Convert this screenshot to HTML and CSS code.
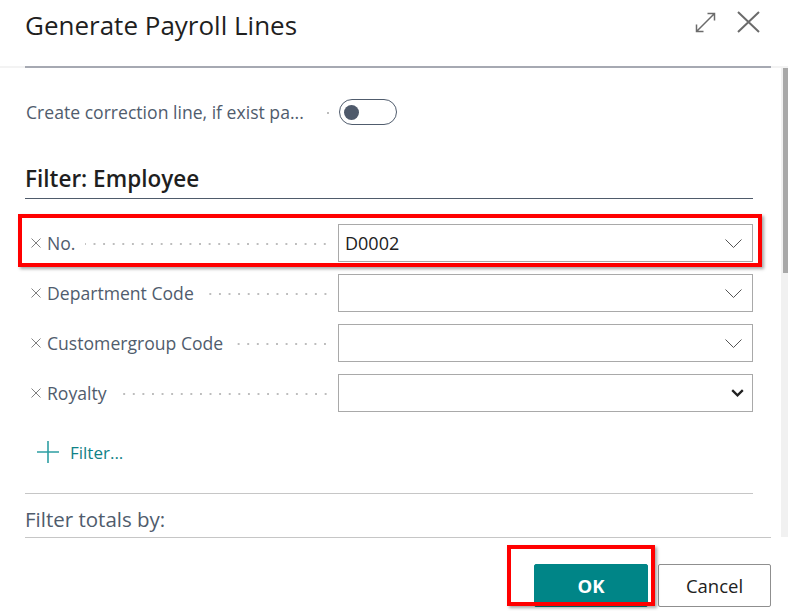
FILE: index.html
```html
<!DOCTYPE html>
<html lang="en">
<head>
<meta charset="utf-8">
<title>Generate Payroll Lines</title>
<link rel="stylesheet" href="styles.css">
</head>
<body>
<div class="dialog">
  <header class="dlg-head">
    <h1 class="dlg-title">Generate Payroll Lines</h1>
    <div class="dlg-actions">
      <svg class="ico-expand" width="21" height="21" viewBox="0 0 21 21" aria-hidden="true">
        <path d="M1.5 19.5 L19.5 1.5 M12.5 1.5 H19.5 V8.5 M1.5 12.5 V19.5 H8.5" fill="none" stroke="#6b6b6b" stroke-width="1.5"/>
      </svg>
      <svg class="ico-close" width="23" height="22" viewBox="0 0 23 22" aria-hidden="true">
        <path d="M1 1 L22 21 M22 1 L1 21" fill="none" stroke="#6b6b6b" stroke-width="2"/>
      </svg>
    </div>
  </header>
  <div class="head-sep"><div class="head-sep-line"></div></div>

  <div class="body-wrap">
    <div class="content">
      <div class="field-row toggle-row">
        <div class="field-label">
          <span class="label-text">Create correction line, if exist pa...</span>
          <span class="leader single"></span>
        </div>
        <div class="toggle"><span class="knob"></span></div>
      </div>

      <h2 class="group-title">Filter: Employee</h2>

      <div class="filters">
        <div class="field-row">
          <div class="field-label">
            <svg class="ico-x" width="10" height="10" viewBox="0 0 10 10" aria-hidden="true"><path d="M0.5 0.5 L9.5 9.5 M9.5 0.5 L0.5 9.5" stroke="#808080" stroke-width="1"/></svg>
            <span class="label-text">No.</span>
            <span class="leader"></span>
          </div>
          <div class="input">
            <span class="input-value">D0002</span>
            <svg class="chev" width="17" height="9" viewBox="0 0 17 9" aria-hidden="true"><path d="M0.5 0.5 L8.5 8.5 L16.5 0.5" fill="none" stroke="#555" stroke-width="1"/></svg>
          </div>
        </div>
        <div class="field-row">
          <div class="field-label">
            <svg class="ico-x" width="10" height="10" viewBox="0 0 10 10" aria-hidden="true"><path d="M0.5 0.5 L9.5 9.5 M9.5 0.5 L0.5 9.5" stroke="#808080" stroke-width="1"/></svg>
            <span class="label-text">Department Code</span>
            <span class="leader"></span>
          </div>
          <div class="input">
            <span class="input-value"></span>
            <svg class="chev" width="17" height="9" viewBox="0 0 17 9" aria-hidden="true"><path d="M0.5 0.5 L8.5 8.5 L16.5 0.5" fill="none" stroke="#555" stroke-width="1"/></svg>
          </div>
        </div>
        <div class="field-row">
          <div class="field-label">
            <svg class="ico-x" width="10" height="10" viewBox="0 0 10 10" aria-hidden="true"><path d="M0.5 0.5 L9.5 9.5 M9.5 0.5 L0.5 9.5" stroke="#808080" stroke-width="1"/></svg>
            <span class="label-text">Customergroup Code</span>
            <span class="leader"></span>
          </div>
          <div class="input">
            <span class="input-value"></span>
            <svg class="chev" width="17" height="9" viewBox="0 0 17 9" aria-hidden="true"><path d="M0.5 0.5 L8.5 8.5 L16.5 0.5" fill="none" stroke="#555" stroke-width="1"/></svg>
          </div>
        </div>
        <div class="field-row">
          <div class="field-label">
            <svg class="ico-x" width="10" height="10" viewBox="0 0 10 10" aria-hidden="true"><path d="M0.5 0.5 L9.5 9.5 M9.5 0.5 L0.5 9.5" stroke="#808080" stroke-width="1"/></svg>
            <span class="label-text">Royalty</span>
            <span class="leader"></span>
          </div>
          <div class="input select">
            <span class="input-value"></span>
            <svg class="chev-bold" width="13" height="8" viewBox="0 0 13 8" aria-hidden="true"><path d="M1.2 1.2 L6.5 6.3 L11.8 1.2" fill="none" stroke="#222" stroke-width="2.3"/></svg>
          </div>
        </div>
      </div>

      <div class="add-filter">
        <svg class="ico-plus" width="22" height="22" viewBox="0 0 22 22" aria-hidden="true"><path d="M11 0 V22 M0 11 H22" stroke="#2e9fa3" stroke-width="1.6"/></svg>
        <span class="add-text">Filter...</span>
      </div>

      <div class="totals">Filter totals by:</div>
    </div>
    <div class="scrollbar"><div class="thumb"></div></div>
  </div>
  <div class="body-end"></div>

  <footer class="dlg-foot">
    <button class="btn btn-primary">OK</button>
    <button class="btn btn-default">Cancel</button>
  </footer>

  <div class="mark mark-row"></div>
  <div class="mark mark-ok"></div>
</div>
</body>
</html>
```

FILE: styles.css
```css
* { box-sizing: border-box; }

html, body {
  margin: 0;
  padding: 0;
  background: #ffffff;
}

body {
  width: 788px;
  height: 611px;
  overflow: hidden;
  font-family: "Open Sans", "Noto Sans", "DejaVu Sans", sans-serif;
  color: #212121;
}

.dialog {
  position: relative;
  width: 788px;
  height: 611px;
}

/* header */
.dlg-head {
  height: 66px;
  display: flex;
  align-items: center;
  justify-content: space-between;
  padding: 0 28px 0 25px;
}

.dlg-title {
  margin: 0;
  font-size: 26px;
  font-weight: 500;
  line-height: 32px;
  color: #1f1f1f;
  position: relative;
  top: -8px;
}

.dlg-actions {
  display: flex;
  align-items: center;
  gap: 21px;
  position: relative;
  top: -11px;
}

.head-sep {
  height: 2px;
  background: #f3f3f3;
}

.head-sep-line {
  margin-left: 25px;
  width: 746px;
  height: 2px;
  background: #a6a9b2;
}

/* body */
.body-wrap {
  display: flex;
  height: 469px;
  overflow: hidden;
}

.content {
  flex: 1;
  padding-left: 25px;
  padding-right: 28px;
}

.scrollbar {
  flex: none;
  width: 7px;
  background: #f1f1f1;
}

.thumb {
  width: 5px;
  margin-left: 2px;
  height: 205px;
  background: #a8a8a8;
}

.body-end {
  margin-left: 25px;
  width: 746px;
  height: 1px;
  background: #c6c6c6;
}

/* rows */
.field-row {
  display: flex;
  align-items: center;
  height: 38px;
}

.toggle-row {
  margin-top: 19px;
  height: 50px;
}

.field-label {
  width: 313px;
  flex: none;
  display: flex;
  align-items: center;
  padding-left: 6px;
  padding-right: 8px;
  color: #505c6d;
  font-size: 17.6px;
}

.toggle-row .field-label {
  padding-left: 1px;
}

.ico-x {
  flex: none;
  margin-right: 6px;
}

.label-text {
  white-space: nowrap;
  line-height: 24px;
}

.leader {
  flex: 1;
  height: 4px;
  margin-left: 10px;
  background-image: radial-gradient(circle, #bdbdbd 0.9px, transparent 1.2px);
  background-size: 9.6px 4px;
  background-position: right center;
  background-repeat: repeat-x;
  position: relative;
  top: 1px;
}

.leader.single {
  background-size: 4px 4px;
  background-repeat: no-repeat;
}

.toggle {
  margin-left: 1px;
  width: 58px;
  height: 26px;
  border: 1.5px solid #505c6d;
  border-radius: 13px;
  display: flex;
  align-items: center;
  padding-left: 4px;
}

.knob {
  width: 15px;
  height: 15px;
  border-radius: 50%;
  background: #4f5a6b;
}

.group-title {
  margin: 28px 0 0;
  font-size: 22.5px;
  font-weight: 600;
  line-height: 28px;
  padding-bottom: 5px;
  border-bottom: 1px solid #4f5b6b;
  color: #1f1f1f;
}

.filters {
  margin-top: 25px;
  display: flex;
  flex-direction: column;
  gap: 12px;
}

.input {
  flex: 1;
  height: 38px;
  border: 1px solid #a9a9a9;
  display: flex;
  align-items: center;
  padding: 0 10px 0 6px;
}

.input.select {
  padding-right: 8px;
}

.input-value {
  flex: 1;
  font-size: 18px;
  color: #212121;
}

.chev, .chev-bold {
  flex: none;
}

.add-filter {
  margin-top: 25px;
  height: 30px;
  display: flex;
  align-items: center;
  padding-left: 12px;
  gap: 11px;
}

.add-text {
  color: #0f8287;
  font-size: 17px;
}

.totals {
  margin-top: 26px;
  border-top: 1px solid #c6c6c6;
  padding-top: 13px;
  font-size: 20.5px;
  line-height: 24px;
  color: #505c6d;
}

/* footer */
.dlg-foot {
  display: flex;
  justify-content: flex-end;
  gap: 10px;
  padding: 26px 17px 0 0;
}

.btn {
  height: 43px;
  font-family: inherit;
  font-size: 18.5px;
  border-radius: 2px;
  cursor: pointer;
}

.btn-primary {
  width: 114px;
  background: #008587;
  border: 1px solid #008587;
  color: #ffffff;
  font-weight: 700;
}

.btn-default {
  width: 113px;
  background: #ffffff;
  border: 1px solid #8f8f8f;
  color: #212121;
}

/* red annotation boxes drawn over the screenshot */
.mark {
  position: absolute;
  border: 4px solid #ff0000;
  box-shadow: 2px 2px 3px rgba(0, 0, 0, 0.35);
  pointer-events: none;
}

.mark-row {
  left: 18px;
  top: 214px;
  width: 744px;
  height: 53px;
}

.mark-ok {
  left: 507px;
  top: 545px;
  width: 148px;
  height: 61px;
}
```
